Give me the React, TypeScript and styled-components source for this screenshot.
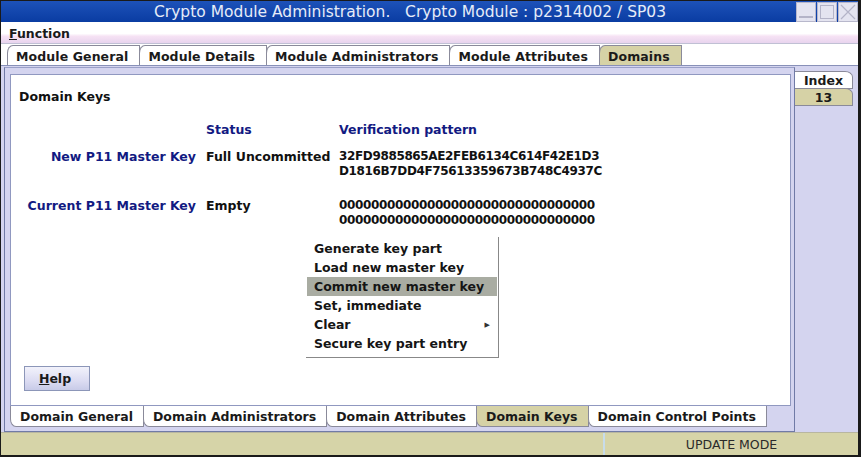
import styled, { createGlobalStyle } from "styled-components";

const GlobalStyle = createGlobalStyle`
  html, body { margin: 0; padding: 0; background: #ffffff; }
  body { font-family: "DejaVu Sans", "Liberation Sans", sans-serif; }
  * { box-sizing: border-box; }
`;

const Window = styled.div`
  width: 861px;
  height: 457px;
  display: flex;
  flex-direction: column;
  border: 1px solid #1a1a1a;
  border-right-width: 3px;
  border-bottom-width: 2px;
  background: #d4d4ef;
  overflow: hidden;
`;

const TitleBar = styled.div`
  height: 21px;
  flex: none;
  display: flex;
  align-items: center;
  padding-left: 153px;
  background: linear-gradient(#1d52b9, #0a3ca2);
  color: #e6ecf8;
  font-size: 15.5px;
  white-space: pre;
`;

const WinButtons = styled.div`
  margin-left: auto;
  display: flex;
  gap: 1px;
  height: 100%;
  padding: 1px 0;
`;

const WinButton = styled.div`
  width: 20px;
  height: 20px;
  background: #e4e4f0;
  border: 1px solid #b8b8cc;
  display: flex;
  align-items: center;
  justify-content: center;
`;

const MenuBar = styled.div`
  height: 22px;
  flex: none;
  display: flex;
  align-items: center;
  padding: 2px 8px 0;
  font-size: 12.5px;
  font-weight: bold;
  color: #1a1a1a;
  background: linear-gradient(#ffffff 0%, #ffffff 55%, #f6e2f4 68%, #e8d4ee 100%);
  border-bottom: 1px solid #c0c0d4;
`;

const Mnemonic = styled.span`
  text-decoration: underline;
`;

const TopTabRow = styled.div`
  height: 22px;
  flex: none;
  display: flex;
  align-items: flex-end;
  padding-left: 6px;
  background: #ffffff;
  border-bottom: 1px solid #8890b8;
`;

const TopTab = styled.div<{ $active?: boolean }>`
  height: 20px;
  display: flex;
  align-items: center;
  padding: 2px 11px 0 8px;
  margin-right: -1px;
  font-size: 12.5px;
  font-weight: bold;
  letter-spacing: 0.1px;
  color: #1a1a1a;
  background: ${(p) => (p.$active ? "#d6d2a6" : "#ffffff")};
  border: 1px solid #8a8a9a;
  border-bottom: none;
  border-top-left-radius: 6px 8px;
`;

const Body = styled.div`
  flex: 1;
  display: flex;
  padding: 1px 0 0 3px;
  background: #d4d4ef;
`;

const Frame = styled.div`
  width: 791px;
  display: flex;
  flex-direction: column;
  border: 1px solid #707aa6;
  border-top-color: #9aa0c8;
  padding: 6px 3px 3px 5px;
`;

const Panel = styled.div`
  position: relative;
  flex: 1;
  display: flex;
  flex-direction: column;
  background: #ffffff;
  border: 1px solid #9098c0;
  padding: 14px 0 14px 8px;
`;

const Heading = styled.div`
  font-size: 12.5px;
  font-weight: bold;
  color: #111111;
  line-height: 15px;
  margin-bottom: 18px;
`;

const KeyGrid = styled.div`
  display: grid;
  grid-template-columns: 187px 133px auto;
  row-gap: 12px;
  font-size: 12.5px;
  font-weight: bold;
  line-height: 15px;
`;

const ColHead = styled.div`
  color: #121a82;
`;

const KeyLabel = styled.div<{ $spaced?: boolean }>`
  color: #121a82;
  text-align: right;
  padding-right: 10px;
  margin-top: ${(p) => (p.$spaced ? "7px" : "0")};
`;

const Cell = styled.div<{ $spaced?: boolean }>`
  color: #111111;
  margin-top: ${(p) => (p.$spaced ? "7px" : "0")};
`;

const Pattern = styled.div<{ $spaced?: boolean }>`
  color: #111111;
  font-size: 12px;
  letter-spacing: -0.36px;
  margin-top: ${(p) => (p.$spaced ? "7px" : "0")};
`;

const HelpButton = styled.button`
  margin-top: auto;
  margin-left: 5px;
  width: 66px;
  height: 25px;
  font-family: inherit;
  font-size: 12.5px;
  font-weight: bold;
  color: #1a1a1a;
  background: linear-gradient(#f2f2fb, #dcdcf2 60%, #c8cbe8);
  border: 1px solid #8c96b8;
  padding: 0 4px 0 0;
`;

const Popup = styled.div`
  position: absolute;
  left: 295px;
  top: 162px;
  width: 193px;
  padding: 2px 1px 4px 1px;
  background: #ffffff;
  border-right: 1px solid #888888;
  border-bottom: 1px solid #888888;
  font-size: 12.5px;
  font-weight: bold;
  color: #151515;
`;

const PopupItem = styled.div<{ $hover?: boolean }>`
  height: 19px;
  display: flex;
  align-items: center;
  padding: 0 7px 0 7px;
  background: ${(p) => (p.$hover ? "#a9aca2" : "transparent")};
`;

const SubArrow = styled.span`
  margin-left: auto;
  font-size: 7px;
  color: #333;
`;

const BottomTabRow = styled.div`
  height: 22px;
  display: flex;
  align-items: flex-start;
  padding-left: 0;
`;

const BottomTab = styled.div<{ $active?: boolean }>`
  height: 21px;
  display: flex;
  align-items: center;
  padding: 1px 10px 0 9px;
  margin-right: -1px;
  font-size: 12.5px;
  font-weight: bold;
  color: #1a1a1a;
  background: ${(p) => (p.$active ? "#d6d2a6" : "#ffffff")};
  border: 1px solid #8a8a9a;
  border-top: none;
  border-bottom-left-radius: 6px 8px;
`;

const SideTabs = styled.div`
  display: flex;
  flex-direction: column;
  padding: 4px 0 0 0;
`;

const SideTab = styled.div<{ $active?: boolean }>`
  width: 58px;
  height: 18px;
  margin-bottom: -1px;
  display: flex;
  align-items: center;
  justify-content: center;
  padding-top: 1px;
  font-size: 12.5px;
  font-weight: bold;
  color: #1a1a1a;
  background: ${(p) => (p.$active ? "#d6d2a6" : "#ffffff")};
  border: 1px solid #8a8a9a;
  border-left: none;
  border-top-right-radius: 8px 6px;
`;

const StatusBar = styled.div`
  height: 23px;
  flex: none;
  display: flex;
  background: #d6d4a8;
  border-top: 1px solid #b8b6a0;
`;

const StatusCell = styled.div<{ $w?: number }>`
  ${(p) => (p.$w ? `width: ${p.$w}px;` : "flex: 1;")}
  display: flex;
  align-items: center;
  justify-content: center;
  font-size: 12.5px;
  color: #2a2a2a;
  & + & {
    border-left: 2px solid #c8dcea;
  }
`;

export default function App() {
  return (
    <>
      <GlobalStyle />
      <Window>
        <TitleBar>
          {"Crypto Module Administration.   Crypto Module : p2314002 / SP03"}
          <WinButtons>
            <WinButton>
              <svg width="16" height="16" viewBox="0 0 16 16">
                <rect x="1" y="12" width="14" height="2" fill="#b4b4c8" />
              </svg>
            </WinButton>
            <WinButton>
              <svg width="16" height="16" viewBox="0 0 16 16">
                <rect x="1.5" y="1.5" width="13" height="13" fill="none" stroke="#b4b4c8" />
              </svg>
            </WinButton>
            <WinButton>
              <svg width="16" height="16" viewBox="0 0 16 16">
                <path d="M1 1 L15 15 M15 1 L1 15" stroke="#b4b4c8" strokeWidth="1.2" />
              </svg>
            </WinButton>
          </WinButtons>
        </TitleBar>

        <MenuBar>
          <span>
            <Mnemonic>F</Mnemonic>unction
          </span>
        </MenuBar>

        <TopTabRow>
          <TopTab>Module General</TopTab>
          <TopTab>Module Details</TopTab>
          <TopTab>Module Administrators</TopTab>
          <TopTab>Module Attributes</TopTab>
          <TopTab $active>Domains</TopTab>
        </TopTabRow>

        <Body>
          <Frame>
            <Panel>
              <Heading>Domain Keys</Heading>
              <KeyGrid>
                <div />
                <ColHead>Status</ColHead>
                <ColHead>Verification pattern</ColHead>

                <KeyLabel>New P11 Master Key</KeyLabel>
                <Cell>Full Uncommitted</Cell>
                <Pattern>
                  32FD9885865AE2FEB6134C614F42E1D3
                  <br />
                  D1816B7DD4F75613359673B748C4937C
                </Pattern>

                <KeyLabel $spaced>Current P11 Master Key</KeyLabel>
                <Cell $spaced>Empty</Cell>
                <Pattern $spaced>
                  00000000000000000000000000000000
                  <br />
                  00000000000000000000000000000000
                </Pattern>
              </KeyGrid>

              <HelpButton>
                <Mnemonic>H</Mnemonic>elp
              </HelpButton>

              <Popup>
                <PopupItem>Generate key part</PopupItem>
                <PopupItem>Load new master key</PopupItem>
                <PopupItem $hover>Commit new master key</PopupItem>
                <PopupItem>Set, immediate</PopupItem>
                <PopupItem>
                  Clear<SubArrow>▶</SubArrow>
                </PopupItem>
                <PopupItem>Secure key part entry</PopupItem>
              </Popup>
            </Panel>

            <BottomTabRow>
              <BottomTab>Domain General</BottomTab>
              <BottomTab>Domain Administrators</BottomTab>
              <BottomTab>Domain Attributes</BottomTab>
              <BottomTab $active>Domain Keys</BottomTab>
              <BottomTab>Domain Control Points</BottomTab>
            </BottomTabRow>
          </Frame>

          <SideTabs>
            <SideTab>Index</SideTab>
            <SideTab $active>13</SideTab>
          </SideTabs>
        </Body>

        <StatusBar>
          <StatusCell $w={602} />
          <StatusCell>UPDATE MODE</StatusCell>
        </StatusBar>
      </Window>
    </>
  );
}
